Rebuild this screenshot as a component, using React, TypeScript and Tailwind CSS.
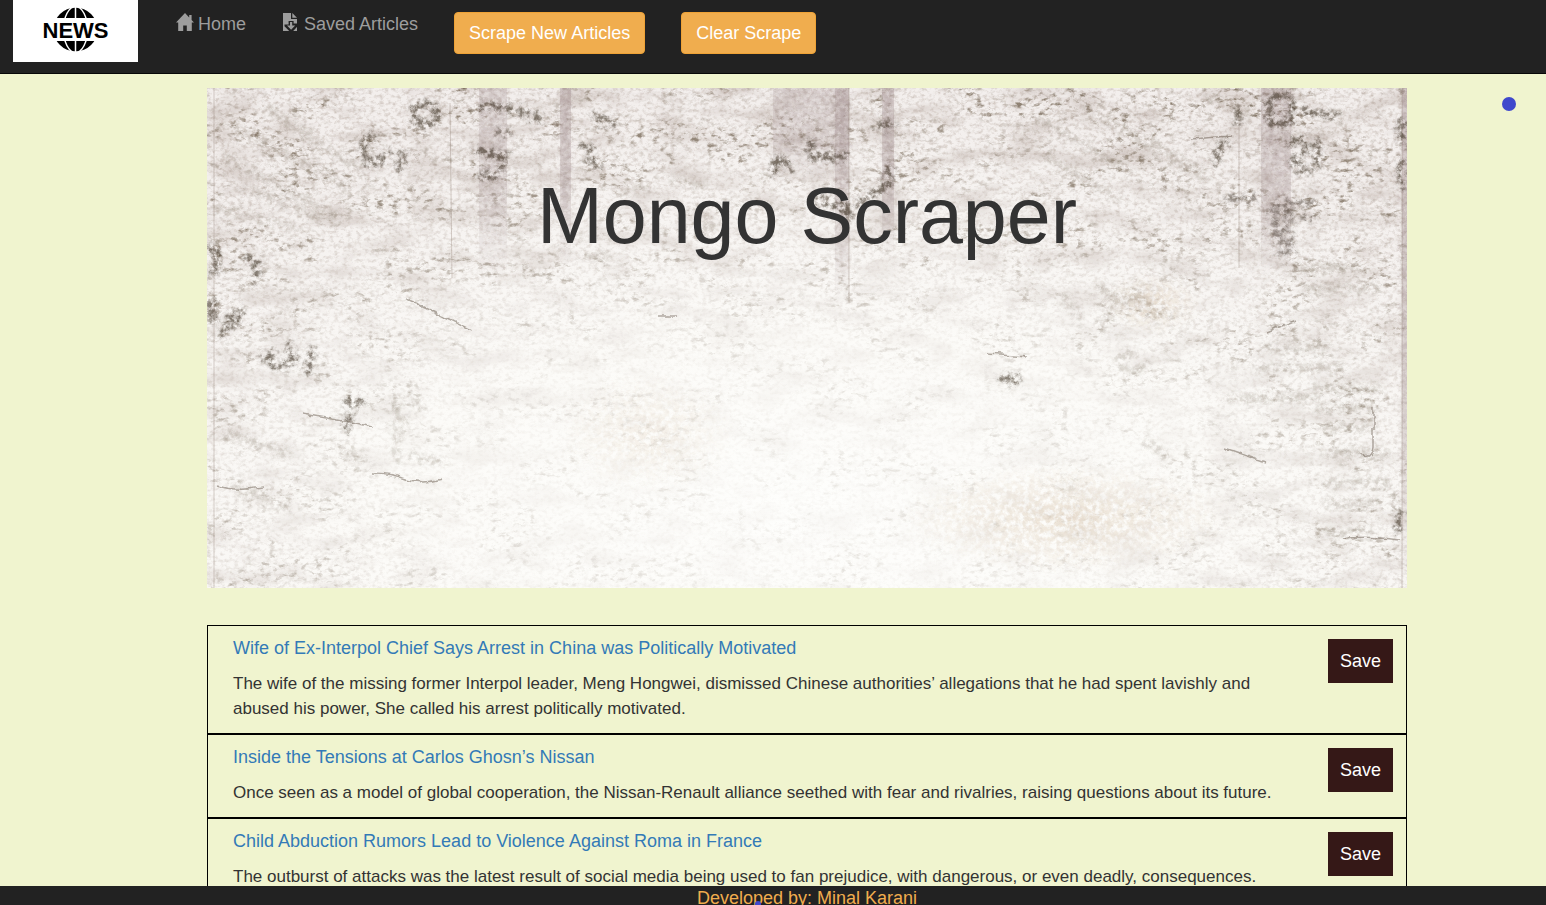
import React from "react";

type Article = { title: string; summary: string };

const articles: Article[] = [
  {
    title: "Wife of Ex-Interpol Chief Says Arrest in China was Politically Motivated",
    summary:
      "The wife of the missing former Interpol leader, Meng Hongwei, dismissed Chinese authorities’ allegations that he had spent lavishly and abused his power, She called his arrest politically motivated.",
  },
  {
    title: "Inside the Tensions at Carlos Ghosn’s Nissan",
    summary:
      "Once seen as a model of global cooperation, the Nissan-Renault alliance seethed with fear and rivalries, raising questions about its future.",
  },
  {
    title: "Child Abduction Rumors Lead to Violence Against Roma in France",
    summary:
      "The outburst of attacks was the latest result of social media being used to fan prejudice, with dangerous, or even deadly, consequences.",
  },
];

function Logo() {
  return (
    <svg viewBox="0 0 125 62" className="block h-[62px] w-[125px] bg-white" role="img" aria-label="News">
      <defs>
        <clipPath id="caps">
          <rect x="38" y="7" width="50" height="11" />
          <rect x="38" y="41" width="50" height="11" />
        </clipPath>
      </defs>
      <g clipPath="url(#caps)">
        <circle cx="62.500" cy="29.500" r="22" fill="#000" />
        <g fill="none" stroke="#fff" strokeWidth="1.500">
          <path d="M62.500 7v45" />
          <ellipse cx="62.500" cy="29.500" rx="12" ry="23" />
        </g>
      </g>
      <text x="62.500" y="37.500" textAnchor="middle" fontFamily="Liberation Sans, Arial, sans-serif" fontWeight="700" fontSize="22">
        NEWS
      </text>
    </svg>
  );
}

function HomeIcon() {
  return (
    <svg viewBox="0 0 18 18" className="h-[18px] w-[18px]" fill="currentColor" aria-hidden="true">
      <path d="M9 0 0 9.500h2.200V18h5v-5.500h3.600V18h5V9.500H18l-2.400-2.600V2h-2.400v2.400z" />
    </svg>
  );
}

function SaveFileIcon() {
  return (
    <svg viewBox="0 0 18 18" className="h-[18px] w-[18px]" fill="currentColor" aria-hidden="true">
      <path d="M1 0h8v6h6v12H1z" />
      <path d="M10.300 0 15 4.800h-4.700z" />
      <path d="M6.600 8h5v2.500H15L15.800 13l-4.600 5H7.200L2.500 13.200v-1.700h4.100z" fill="#222" />
      <path d="M8 9h2.200v3.500h3l-4.100 4.300L5 12.500h3z" />
    </svg>
  );
}

const bands = [
  { x: 272, w: 28, h: 190, o: 0.2 },
  { x: 353, w: 11, h: 175, o: 0.32 },
  { x: 566, w: 76, h: 95, o: 0.18 },
  { x: 628, w: 14, h: 215, o: 0.26 },
  { x: 675, w: 12, h: 170, o: 0.32 },
  { x: 1054, w: 30, h: 190, o: 0.26 },
  { x: 1195, w: 5, h: 500, o: 0.35 },
];

const smudges = [
  "M206 25q8-16 22-6q5 16-6 17q-14 2-15-11",
  "M165 48q-16 8-5 24q10 8 22-8M196 66l-4 14",
  "M274 18h10M290 19l24 4l18 8M292 44h10M270 62l28 6l-2 12M274 88h14",
  "M388 28l16 8M376 58l10 4M380 72l12 4",
  "M566 84l4-13l8 2l6 8M602 54l4 14l16 2l16-3M616 112l12 4l12 10",
  "M682 80v10M610 112l28 5l4 12M650 116l32-20M670 38l14-2",
  "M1062 21q0-14 12-14t11 15q-2 15-11 15t-12-10",
  "M1084 56q8-8 14-2q4 8-12 20q4 12 16 8M1110 52v25M1096 24l34 3",
  "M1031 22v12M1019 54q-10 5-9 20M1194 34v20M1194 75v22",
  "M4 160q10 8 3 25M4 214l2 20M16 246l8-20M28 236l6-13M40 170q16 10 8 20",
  "M66 265l-8 6l12 7l16-4l-4-16M106 263l-5 20",
  "M140 314h14M144 328l-5 12M795 290l16 3M1192 424v18",
];

const fadedMarks = [
  "M30 40l90 50M20 70l110 60M40 100l70 30M60 20l90 60M90 70l50 30M10 120l80 20",
  "M465 92l30 6M420 102l20-4M500 128l2 20M378 168l24 4l-10-6",
  "M830 30l90 50M880 20l100 60M840 70l70 40M1000 10l40 14M940 50l60 40",
  "M890 200l26 12l14-4l24 18M896 238l12-24M860 210l12 20M926 265q-20 2-10 16q18 7 22-6",
  "M190 332h8M206 366l8 5M214 372h20M135 360l16 10M190 310v60M206 308l8 14",
  "M1110 300h60M1110 320h60M1120 340h50M1120 365h60M1120 395h60M1120 415h50M1120 445h46",
  "M1100 200h70M1090 180h60M1060 260h60M1050 280h80M1020 310h90M940 356l20 10",
  "M20 345l60 20M30 400l50 20",
];

const paragraphs = "M1068 116h20M1063 124h22M1065 134h20M1066 144h18M1069 154h17M1073 165h12M1092 116l14-2M1094 130h12M1018 110h30";

const cracks = "M10 398q20 6 45 1M165 385q20 0 35 6t34 0M95 325q40 6 70 14M198 210l46 22l20 10M450 228h20M780 265l40 3M1136 451q20-4 56 1M1152 366q12 10 14-8v-40M1018 360l40 14M1060 245l28-12M985 51l40-3";

function PaperTexture() {
  return (
    <svg
      viewBox="0 0 1200 500"
      preserveAspectRatio="xMidYMid slice"
      className="absolute inset-0 h-full w-full"
      aria-hidden="true"
    >
      <defs>
        <radialGradient id="paper" cx="0.500" cy="0.850" r="0.800">
          <stop offset="0" stopColor="#fefefc" />
          <stop offset="0.450" stopColor="#fcfbf8" />
          <stop offset="1" stopColor="#f3efed" />
        </radialGradient>
        <radialGradient id="wear" cx="0.480" cy="0.800" r="0.850">
          <stop offset="0" stopColor="#fff" stopOpacity="0.150" />
          <stop offset="0.350" stopColor="#fff" stopOpacity="0.250" />
          <stop offset="0.750" stopColor="#fff" stopOpacity="0.800" />
          <stop offset="1" stopColor="#fff" />
        </radialGradient>
        <radialGradient id="tan">
          <stop offset="0" stopColor="#d8c3a8" stopOpacity="0.450" />
          <stop offset="1" stopColor="#d8c3a8" stopOpacity="0" />
        </radialGradient>
        <mask id="worn">
          <rect width="1200" height="500" fill="url(#wear)" />
        </mask>
        <linearGradient id="fade" x1="0" y1="0" x2="0" y2="1">
          <stop offset="0" stopColor="#9b8788" />
          <stop offset="0.600" stopColor="#9b8788" stopOpacity="0.800" />
          <stop offset="1" stopColor="#9b8788" stopOpacity="0" />
        </linearGradient>
        <filter id="speckle" x="0" y="0" width="100%" height="100%" colorInterpolationFilters="sRGB">
          <feTurbulence type="fractalNoise" baseFrequency="0.130 0.200" numOctaves="5" seed="11" />
          <feColorMatrix values="0 0 0 0 0.440  0 0 0 0 0.380  0 0 0 0 0.310  3.600 0 0 0 -1.950" result="s" />
          <feTurbulence type="fractalNoise" baseFrequency="0.018 0.030" numOctaves="4" seed="31" />
          <feColorMatrix values="0 0 0 0 0  0 0 0 0 0  0 0 0 0 0  0 4 0 0 -1.600" result="m" />
          <feComposite in="s" in2="m" operator="in" />
          <feGaussianBlur stdDeviation="0.500" />
        </filter>
        <filter id="grain" x="0" y="0" width="100%" height="100%" colorInterpolationFilters="sRGB">
          <feTurbulence type="fractalNoise" baseFrequency="0.220 0.280" numOctaves="3" seed="4" />
          <feColorMatrix values="0 0 0 0 0.620  0 0 0 0 0.550  0 0 0 0 0.500  0 2.200 0 0 -1" />
        </filter>
        <filter id="cloud" x="0" y="0" width="100%" height="100%" colorInterpolationFilters="sRGB">
          <feTurbulence type="fractalNoise" baseFrequency="0.020 0.050" numOctaves="5" seed="23" />
          <feColorMatrix values="0 0 0 0 0.700  0 0 0 0 0.640  0 0 0 0 0.610  0 0 2.200 0 -1" />
        </filter>
        <filter id="rough" filterUnits="userSpaceOnUse" x="0" y="0" width="1200" height="500" colorInterpolationFilters="sRGB">
          <feTurbulence type="fractalNoise" baseFrequency="0.180" numOctaves="4" seed="7" result="n" />
          <feGaussianBlur in="SourceGraphic" stdDeviation="2" result="b" />
          <feDisplacementMap in="b" in2="n" scale="12" xChannelSelector="R" yChannelSelector="G" result="d" />
          <feColorMatrix in="n" values="0 0 0 0 0  0 0 0 0 0  0 0 0 0 0  0 0 3.500 0 -1.150" result="m" />
          <feComposite in="d" in2="m" operator="in" />
          <feGaussianBlur stdDeviation="0.700" />
        </filter>
        <filter id="crack" filterUnits="userSpaceOnUse" x="0" y="0" width="1200" height="500">
          <feTurbulence type="fractalNoise" baseFrequency="0.080" numOctaves="3" seed="5" result="n" />
          <feDisplacementMap in="SourceGraphic" in2="n" scale="7" xChannelSelector="R" yChannelSelector="G" />
          <feGaussianBlur stdDeviation="0.400" />
        </filter>
      </defs>
      <rect width="1200" height="500" fill="url(#paper)" />
      <g filter="url(#rough)">
        <ellipse cx="860" cy="430" rx="170" ry="55" fill="url(#tan)" />
        <ellipse cx="440" cy="345" rx="90" ry="60" fill="url(#tan)" opacity="0.500" />
        <ellipse cx="945" cy="215" rx="50" ry="30" fill="url(#tan)" />
      </g>
      <g mask="url(#worn)">
        <rect width="1200" height="500" filter="url(#cloud)" opacity="0.550" />
        <rect width="1200" height="500" filter="url(#grain)" opacity="0.450" />
        <rect width="1200" height="500" filter="url(#speckle)" opacity="0.800" />
      </g>
      {bands.map((b) => (
        <rect key={b.x} x={b.x} y="0" width={b.w} height={b.h} fill="url(#fade)" opacity={b.o} />
      ))}
      <g filter="url(#rough)">
        {bands.map((b) => (
          <rect key={b.x} x={b.x} y="-10" width={b.w} height={b.h + 10} fill="url(#fade)" opacity={b.o} />
        ))}
      </g>
      <path d="M7 0v500M243 15l2 175M642 0v215M1032 30v150M1195 0v500" fill="none" stroke="#8b7a70" opacity="0.350" />
      <path d={cracks} filter="url(#crack)" fill="none" stroke="#5d5042" strokeWidth="1.500" opacity="0.450" />
      <g filter="url(#rough)" fill="none" strokeLinecap="round">
        <g stroke="#756a58" strokeWidth="8" opacity="0.220">
          {fadedMarks.map((d) => (
            <path key={d} d={d} />
          ))}
        </g>
        <path d={paragraphs} stroke="#5c5148" strokeWidth="5" opacity="0.750" />
        <g stroke="#453a2c" strokeWidth="7" opacity="0.700">
          {smudges.map((d) => (
            <path key={d} d={d} />
          ))}
        </g>
      </g>
    </svg>
  );
}

function ArticleRow({ title, summary }: Article) {
  return (
    <li className="flex items-start gap-6 border border-black pr-[13px] pb-3 pl-[25px]">
      <div className="min-w-0 flex-1 pt-[10px]">
        <h2>
          <a href="#article" className="text-[#337ab7]">
            {title}
          </a>
        </h2>
        <p className="mt-[10px] text-[17px]">{summary}</p>
      </div>
      <button type="button" className="-mb-3 mt-[13px] h-[44px] w-[65px] shrink-0 bg-[#351817] text-white">
        Save
      </button>
    </li>
  );
}

export default function App() {
  return (
    <div className="min-h-screen bg-[#f0f4cf] font-['Liberation_Sans',Arial,sans-serif] text-[18px] leading-[25px] text-[#333]">
      <nav className="flex h-[74px] items-start border-b border-[#080808] bg-[#222] pl-[13px] text-[#9d9d9d]">
        <a href="#top">
          <Logo />
        </a>
        <a href="#home" className="ml-[38px] flex items-start gap-1 pt-3">
          <span className="pt-px">
            <HomeIcon />
          </span>
          Home
        </a>
        <a href="#saved" className="ml-9 flex items-start gap-1 pt-3">
          <span className="pt-px">
            <SaveFileIcon />
          </span>
          Saved Articles
        </a>
        <button
          type="button"
          className="mt-3 ml-9 h-[42px] rounded-[4px] border border-[#eea236] bg-[#f0ad4e] px-[14px] text-white"
        >
          Scrape New Articles
        </button>
        <button
          type="button"
          className="mt-3 ml-9 h-[42px] rounded-[4px] border border-[#eea236] bg-[#f0ad4e] px-[14px] text-white"
        >
          Clear Scrape
        </button>
      </nav>

      <main className="pt-[14px] pl-[68px]">
        <div className="mx-auto max-w-[1200px]">
          <header className="relative h-[500px] overflow-hidden">
            <PaperTexture />
            <h1 className="relative pt-[84px] text-center text-[79px] leading-[88px]">Mongo Scraper</h1>
          </header>
          <ul className="mt-[37px]">
            {articles.map((a) => (
              <ArticleRow key={a.title} {...a} />
            ))}
          </ul>
        </div>
      </main>

      <span className="absolute top-[97px] right-[30px] h-[14px] w-[14px] rounded-full bg-[#3f48cc]" />

      <footer className="fixed inset-x-0 bottom-0 h-[19px] overflow-hidden bg-[#222] pl-[68px] text-center text-[#f0ad4e]">
        <span className="relative inline-block">
          Developed by: Minal Karani
          <span className="absolute top-[15px] left-[58px] h-[6px] w-[6px] rounded-full bg-[#3f48cc]" />
        </span>
      </footer>
    </div>
  );
}
